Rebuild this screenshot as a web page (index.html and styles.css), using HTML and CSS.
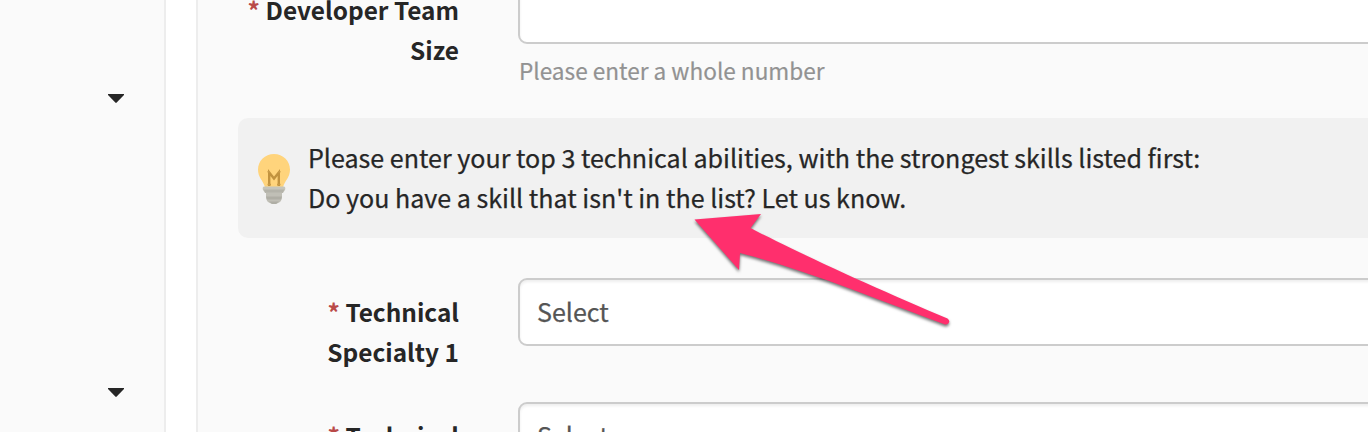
FILE: index.html
```html
<!DOCTYPE html>
<html lang="en">
<head>
<meta charset="utf-8">
<title>Technical skills</title>
<link rel="stylesheet" href="styles.css">
</head>
<body>
<div class="page">
  <aside class="sidebar">
    <svg class="caret" width="16" height="9" viewBox="0 0 16 9"><path d="M0 0H16V1L8.7 8.6Q8 9.3 7.3 8.6L0 1Z"/></svg>
    <svg class="caret" width="16" height="9" viewBox="0 0 16 9"><path d="M0 0H16V1L8.7 8.6Q8 9.3 7.3 8.6L0 1Z"/></svg>
  </aside>
  <main class="panel">
    <div class="row row-size">
      <div class="label"><span class="req">*</span> <span>Developer Team</span><br><span>Size</span></div>
      <div class="control">
        <div class="field"></div>
        <div class="help"><span>Please enter a whole number</span></div>
      </div>
    </div>
    <div class="notice">
      <svg class="bulb" width="32" height="50" viewBox="0 0 32 50">
        <path fill="#ffd47c" d="M16 0C25 0 32 7 32 15.500C32 23 27.500 26 25 33H7C4.500 26 0 23 0 15.500C0 7 7 0 16 0Z"/>
        <path fill="none" stroke="#c2933f" stroke-width="2.4" d="M11.200 32V18.500L16 24.500L20.800 18.500V32"/>
        <path fill="none" stroke="#c99c4a" stroke-width="1.4" d="M9.500 17.800H12M20 17.800H22.500M9.500 30.500H13M19 30.500H22.500"/>
        <path fill="#c6c5bb" d="M6 32.500H26Q28 33 27 36L25 39H7L5 36Q4 33 6 32.500Z"/>
        <path fill="#b4b3aa" d="M5.500 35.500H26.500L24.500 39H7.500Z"/>
        <path fill="#c0bfb6" d="M8 38.500H24V43Q24 48 19 49.500Q16 50.500 13 49.500Q8 48 8 43Z"/>
        <path fill="#afaea5" d="M8 42.500H24L23 45.500H9ZM11 47.500H21L18 50H14Z"/>
      </svg>
      <div class="notice-text"><span>Please enter your top 3 technical abilities, with the strongest skills listed first:</span><br><span>Do you have a skill that isn't in the list? Let us know.</span></div>
    </div>
    <div class="row">
      <div class="label"><span class="req">*</span> <span>Technical</span><br><span>Specialty 1</span></div>
      <div class="control"><div class="field select"><span>Select</span></div></div>
    </div>
    <div class="row">
      <div class="label"><span class="req">*</span> <span>Technical</span><br><span>Specialty 2</span></div>
      <div class="control"><div class="field select"><span>Select</span></div></div>
    </div>
  </main>
  <svg class="arrow" width="270" height="130" viewBox="685 205 270 130">
    <path d="M694.500 219.500L761 214L750.500 228C800 254 880 290 947.500 318.500Q950 320.500 949 322.500Q948 325 945 324.500C880 301 810 271 740 253L739 270Z"/>
  </svg>
</div>
</body>
</html>
```
FILE: styles.css
```css
body {
  margin: 0;
  font-family: "Noto Sans CJK SC", sans-serif;
  font-size: 24.4px;
  line-height: 40px;
  color: #262626;
}
.page {
  position: relative;
  display: flex;
  height: 432px;
  overflow: hidden;
  background: #fff;
}
.sidebar {
  box-sizing: border-box;
  flex: none;
  display: flex;
  flex-direction: column;
  align-items: flex-end;
  gap: 285px;
  width: 166px;
  padding: 94px 40px 0 0;
  background: #fafafa;
  border-right: 2px solid #ededed;
}
.caret {
  flex: none;
  fill: #262626;
}
.panel {
  box-sizing: border-box;
  flex: 1;
  min-width: 0;
  margin-left: 30px;
  padding-left: 40px;
  background: #fafafa;
  border-left: 2px solid #ededed;
}
.row {
  display: flex;
  gap: 59px;
  height: 124px;
}
.row-size {
  height: 142px;
  margin-top: -24px;
}
.label {
  flex: none;
  width: 221px;
  padding-top: 14px;
  text-align: right;
  font-weight: 700;
  white-space: nowrap;
}
.req {
  color: #b94a48;
}
.control {
  flex: 1;
  margin-right: -20px;
}
.field {
  box-sizing: border-box;
  height: 68px;
  border: 2px solid #ccc;
  border-radius: 9px;
  background: #fff;
  box-shadow: inset 0 2px 3px rgba(0, 0, 0, 0.07);
}
.select {
  padding: 11px 17px;
  font-size: 25.07px;
  color: #555;
  -webkit-text-stroke: 0.25px;
}
.help {
  padding: 7px 0 0 1px;
  font-size: 22.6px;
  color: #929292;
  -webkit-text-stroke: 0.2px;
}
.notice {
  box-sizing: border-box;
  display: flex;
  gap: 18px;
  height: 120px;
  margin: 0 -20px 40px 0;
  padding: 19px 20px 20px;
  border-radius: 10px;
  background: #f1f1f1;
}
.bulb {
  flex: none;
  margin-top: 17px;
}
.notice-text {
  font-size: 25.07px;
  white-space: nowrap;
  -webkit-text-stroke: 0.25px;
}
.arrow {
  position: absolute;
  left: 685px;
  top: 205px;
  fill: #ff2f6d;
  filter: drop-shadow(0 2px 1.5px rgba(0, 0, 0, 0.55));
}
```
